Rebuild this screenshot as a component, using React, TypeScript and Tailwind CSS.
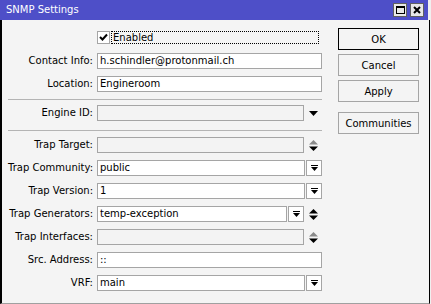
import React from 'react';

const font = { fontFamily: '"DejaVu Sans", Verdana, sans-serif' };

function DropIcon() {
  // bar with a down triangle under it
  return (
    <svg width="7" height="7" viewBox="0 0 7 7">
      <rect x="0" y="0" width="7" height="1" fill="#000" />
      <polygon points="0,2 7,2 3.5,6" fill="#000" />
    </svg>
  );
}

function UpDown({ disabled }: { disabled?: boolean }) {
  return (
    <svg width="9" height="11" viewBox="0 0 9 11">
      <polygon points="0,4.5 9,4.5 4.5,0" fill={disabled ? '#8a8a8a' : '#000'} />
      <polygon points="0,6.5 9,6.5 4.5,11" fill="#000" />
    </svg>
  );
}

function Label({ text }: { text: string }) {
  return <div className="w-[91px] shrink-0 text-right text-[10px] leading-[16px] text-black">{text}</div>;
}

function Field({ value, disabled }: { value?: string; disabled?: boolean }) {
  return (
    <div
      className={`flex-1 h-[16px] border border-[#a5a5a5] pl-[2px] text-[10px] leading-[14px] text-black overflow-hidden whitespace-nowrap ${
        disabled ? 'bg-[#f3f3f3]' : 'bg-white'
      }`}
    >
      {value}
    </div>
  );
}

function BoxButton() {
  return (
    <div className="ml-[1px] w-[16px] h-[16px] shrink-0 border border-[#a5a5a5] bg-white flex items-center justify-center">
      <DropIcon />
    </div>
  );
}

type Row = {
  label: string;
  value?: string;
  disabled?: boolean;
  kind: 'full' | 'button' | 'arrow' | 'updown' | 'button-updown';
};

function FormRow({ row, className }: { row: Row; className?: string }) {
  return (
    <div className={`flex items-center h-[16px] ${className ?? ''}`}>
      <Label text={row.label} />
      <div className="ml-[4px] w-[225px] flex items-center h-[16px]">
        <Field value={row.value} disabled={row.disabled} />
        {(row.kind === 'button' || row.kind === 'button-updown') && <BoxButton />}
        {row.kind === 'arrow' && (
          <div className="w-[18px] shrink-0 flex items-center justify-center">
            <svg width="9" height="5" viewBox="0 0 9 5">
              <polygon points="0,0 9,0 4.5,5" fill="#000" />
            </svg>
          </div>
        )}
        {(row.kind === 'updown' || row.kind === 'button-updown') && (
          <div className="w-[18px] shrink-0 flex items-center justify-center">
            <UpDown disabled={row.disabled} />
          </div>
        )}
      </div>
    </div>
  );
}

const trapRows: Row[] = [
  { label: 'Trap Target:', disabled: true, kind: 'updown' },
  { label: 'Trap Community:', value: 'public', kind: 'button' },
  { label: 'Trap Version:', value: '1', kind: 'button' },
  { label: 'Trap Generators:', value: 'temp-exception', kind: 'button-updown' },
  { label: 'Trap Interfaces:', disabled: true, kind: 'updown' },
  { label: 'Src. Address:', value: '::', kind: 'full' },
  { label: 'VRF:', value: 'main', kind: 'button' },
];

function DlgButton({ text, primary, className }: { text: string; primary?: boolean; className?: string }) {
  return (
    <div
      className={`w-[81px] h-[22px] flex items-center justify-center text-[10px] text-black bg-[#f4f4f4] border ${
        primary ? 'border-black' : 'border-[#a5a5a5]'
      } ${className ?? ''}`}
    >
      {text}
    </div>
  );
}

export default function App() {
  return (
    <div className="w-[431px] h-[304px] bg-[#f0f0f0] overflow-hidden" style={font}>
      <div className="w-[430px] h-[304px] flex flex-col">
        {/* Title bar */}
        <div className="h-[20px] w-[428px] bg-[#4e4fc8] flex items-center pl-[6px] shrink-0">
          <span className="text-white text-[10px] leading-none">SNMP Settings</span>
          <div className="ml-auto flex gap-[3px] mr-[4px]">
            <div className="w-[14px] h-[14px] bg-[#e8e8e8] border border-[#606060] flex items-center justify-center">
              <div className="w-[9px] h-[8px] border border-black border-t-2" />
            </div>
            <div className="w-[14px] h-[14px] bg-[#e8e8e8] border border-[#606060] flex items-center justify-center">
              <svg width="8" height="8" viewBox="0 0 8 8">
                <path d="M1 1 L7 7 M7 1 L1 7" stroke="#000" strokeWidth="2" />
              </svg>
            </div>
          </div>
        </div>

        {/* Body */}
        <div className="flex-1 flex bg-[#f4f4f4] border-l-2 border-r border-black border-b border-b-[#a0a0a0]">
          {/* Form */}
          <div className="w-[320px] flex flex-col">
            <div className="flex items-center mt-[10px] h-[14px]">
              <div className="w-[95px] shrink-0" />
              <div className="w-[13px] h-[13px] border border-[#a5a5a5] bg-white flex items-center justify-center">
                <svg width="9" height="8" viewBox="0 0 9 8">
                  <path d="M1 4 L3.5 6.5 L8 1.5" stroke="#000" strokeWidth="2" fill="none" />
                </svg>
              </div>
              <div className="ml-[1px] mr-[3px] flex-1 h-[13px] border border-dotted border-black text-[10px] leading-[11px] pl-[1px] text-black">
                Enabled
              </div>
            </div>

            <FormRow className="mt-[9px]" row={{ label: 'Contact Info:', value: 'h.schindler@protonmail.ch', kind: 'full' }} />
            <FormRow className="mt-[7px]" row={{ label: 'Location:', value: 'Engineroom', kind: 'full' }} />

            <div className="mt-[7px] ml-[6px] h-px bg-[#b4b4b4]" />

            <FormRow className="mt-[5px]" row={{ label: 'Engine ID:', disabled: true, kind: 'arrow' }} />

            <div className="mt-[9px] ml-[6px] h-px bg-[#b4b4b4]" />

            {trapRows.map((r, i) => (
              <FormRow key={r.label} className={i === 0 ? 'mt-[6px]' : 'mt-[7px]'} row={r} />
            ))}
          </div>

          {/* Buttons */}
          <div className="ml-[16px] flex flex-col pt-[8px]">
            <DlgButton text="OK" primary />
            <DlgButton text="Cancel" className="mt-[4px]" />
            <DlgButton text="Apply" className="mt-[4px]" />
            <DlgButton text="Communities" className="mt-[10px]" />
          </div>
        </div>
      </div>
    </div>
  );
}
